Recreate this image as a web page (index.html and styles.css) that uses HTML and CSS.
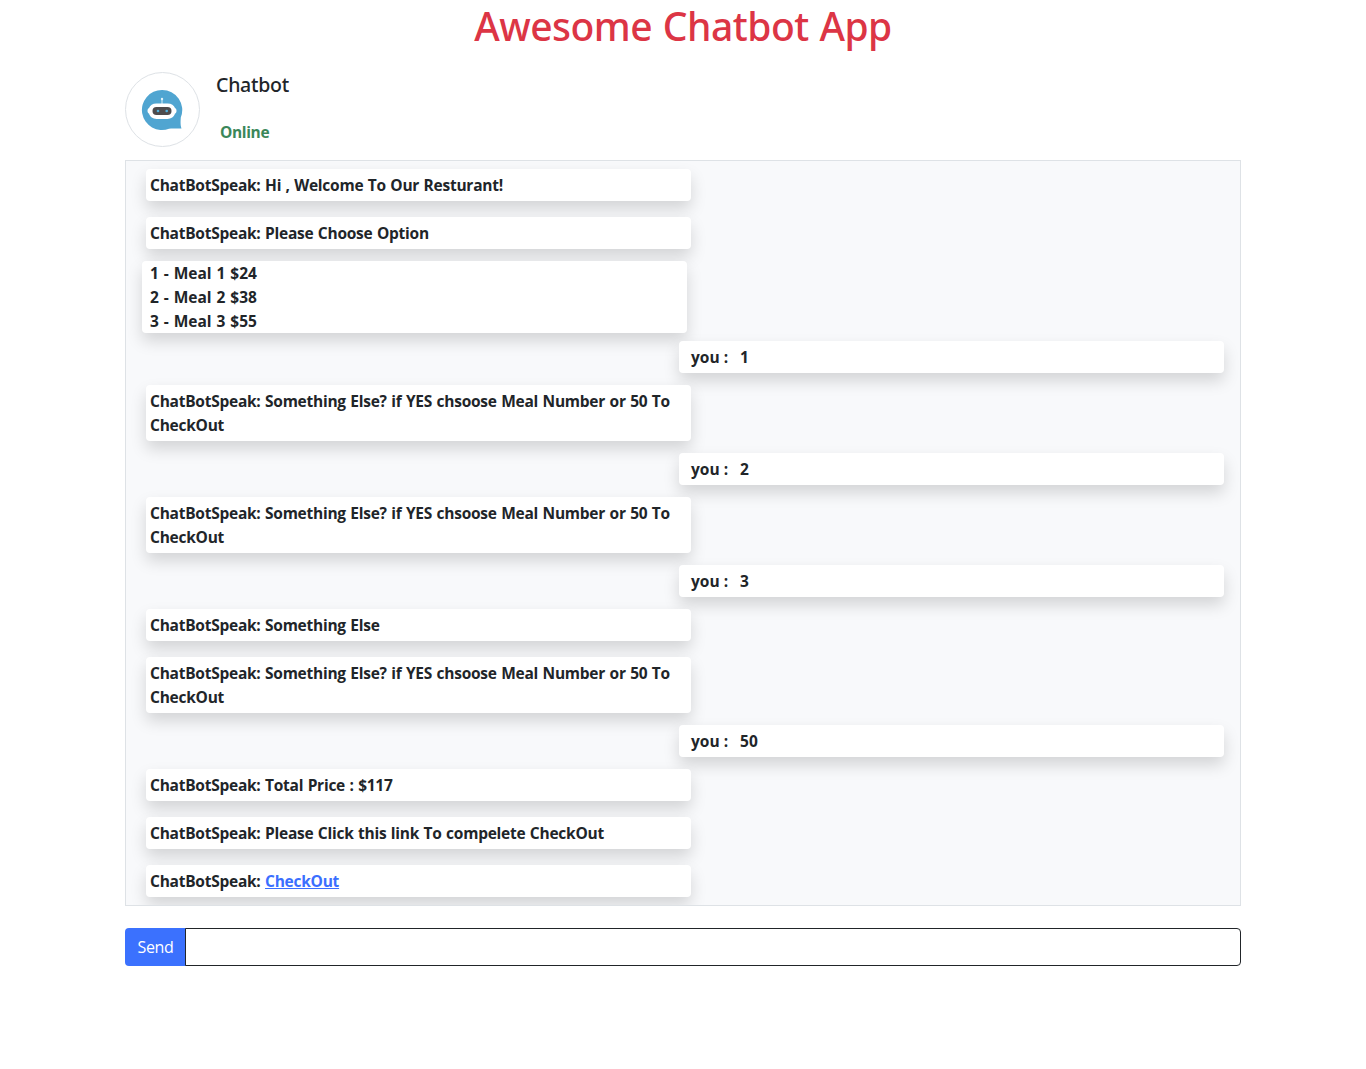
FILE: index.html
```html
<!DOCTYPE html>
<html lang="en">
<head>
<meta charset="utf-8">
<title>Awesome Chatbot App</title>
<link rel="stylesheet" href="styles.css">
</head>
<body>
<h1 class="title">Awesome Chatbot App</h1>
<main class="container">
  <header class="profile">
    <div class="avatar">
      <svg width="42" height="42" viewBox="0 0 42 42">
        <path d="M21 1a20 20 0 1 0 7 38.700c4-.6 8 .1 12.500-.2-1.200-3-1-7-.7-11A20 20 0 0 0 21 1z" fill="#50a5d1"/>
        <path d="M21 11v4" stroke="#d5edf7" stroke-width="1"/>
        <circle cx="21" cy="10" r="1.200" fill="#e4f4fb"/>
        <path d="M15.500 14.500h11c4 0 6.500 2 7.500 4.500 2 .6 2 5 0 5.600-1 3.400-4 5.400-7.500 5.400h-11c-3.500 0-6.500-2-7.500-5.400-2-.6-2-5 0-5.600 1-2.500 3.500-4.500 7.500-4.500z" fill="#fff"/>
        <rect x="11.500" y="18" width="19" height="8" rx="4" fill="#4d4b4d"/>
        <circle cx="17" cy="22" r="1.300" fill="#4fb0dc"/>
        <circle cx="25.700" cy="22" r="1.300" fill="#4fb0dc"/>
      </svg>
    </div>
    <div class="profile-info">
      <h2 class="name">Chatbot</h2>
      <span class="status">Online</span>
    </div>
  </header>
  <section class="chat">
    <div class="bot">ChatBotSpeak: Hi , Welcome To Our Resturant!</div>
    <div class="bot">ChatBotSpeak: Please Choose Option</div>
    <ul class="menu"><li>1 - Meal 1 $24</li><li>2 - Meal 2 $38</li><li>3 - Meal 3 $55</li></ul>
    <div class="you"><span class="who">you :</span><span>1</span></div>
    <div class="bot">ChatBotSpeak: Something Else? if YES chsoose Meal Number or 50 To CheckOut</div>
    <div class="you"><span class="who">you :</span><span>2</span></div>
    <div class="bot">ChatBotSpeak: Something Else? if YES chsoose Meal Number or 50 To CheckOut</div>
    <div class="you"><span class="who">you :</span><span>3</span></div>
    <div class="bot">ChatBotSpeak: Something Else</div>
    <div class="bot">ChatBotSpeak: Something Else? if YES chsoose Meal Number or 50 To CheckOut</div>
    <div class="you"><span class="who">you :</span><span>50</span></div>
    <div class="bot">ChatBotSpeak: Total Price : $117</div>
    <div class="bot">ChatBotSpeak: Please Click this link To compelete CheckOut</div>
    <div class="bot">ChatBotSpeak: <a href="#">CheckOut</a></div>
  </section>
  <form class="composer">
    <button class="send" type="button">Send</button>
    <input class="message" type="text" aria-label="Message">
  </form>
</main>
</body>
</html>
```
FILE: styles.css
```css
* { box-sizing: border-box; }
body {
  margin: 0;
  background: #fff;
  color: #212529;
  font: 400 16px/24px "Segoe UI", "Open Sans", "Noto Sans", sans-serif;
}
.title {
  margin: 2px 0 22px;
  color: #dc3545;
  font-family: "Segoe UI", "Noto Sans", sans-serif;
  font-size: 39px;
  line-height: 48px;
  font-weight: 500;
  letter-spacing: -.5px;
  word-spacing: 1px;
  text-align: center;
}
.container { width: 1116px; margin: 0 auto; }
.profile { display: flex; gap: 16px; height: 88px; }
.avatar {
  display: flex;
  align-items: center;
  justify-content: center;
  width: 75px;
  height: 75px;
  padding: 0 1px 0 0;
  border: 1px solid #dee2e6;
  border-radius: 50%;
}
.profile-info { display: flex; flex-direction: column; }
.name {
  margin: 1px 0 23px;
  font-family: "Segoe UI", "Noto Sans", sans-serif;
  font-size: 19.5px;
  line-height: 24px;
  font-weight: 500;
  letter-spacing: -.25px;
}
.status { padding-left: 4px; color: #3b875a; font-size: 15.5px; font-weight: 700; letter-spacing: -.35px; }
.chat {
  display: flex;
  flex-direction: column;
  overflow: hidden;
  border: 1px solid #dee2e6;
  background: #f8f9fb;
  font-size: 15.5px;
  font-weight: 700;
}
.bot, .menu, .you {
  width: 545px;
  border-radius: 4px;
  background: #fff;
  box-shadow: 0 8px 16px rgba(0, 0, 0, .15);
}
.bot { margin: 8px 0 8px 20px; padding: 4px; letter-spacing: -.25px; word-spacing: .7px; }
.menu { margin: 4px 0 4px 16px; padding: 0 8px; list-style: none; word-spacing: .9px; }
.you { display: flex; gap: 12px; margin: 4px 16px 4px auto; padding: 4px 12px; }
.bot a { color: #3b6fff; }
.composer { display: flex; height: 38px; margin-top: 22px; }
.send {
  width: 61px;
  padding: 0;
  border: 0;
  border-radius: 4px 0 0 4px;
  background: #3b71fe;
  color: #fff;
  font: inherit;
  letter-spacing: -.3px;
}
.message {
  flex: 1;
  margin-left: -1px;
  border: 1px solid #212529;
  border-radius: 0 4px 4px 0;
  background: #fff;
  font: inherit;
}
```
